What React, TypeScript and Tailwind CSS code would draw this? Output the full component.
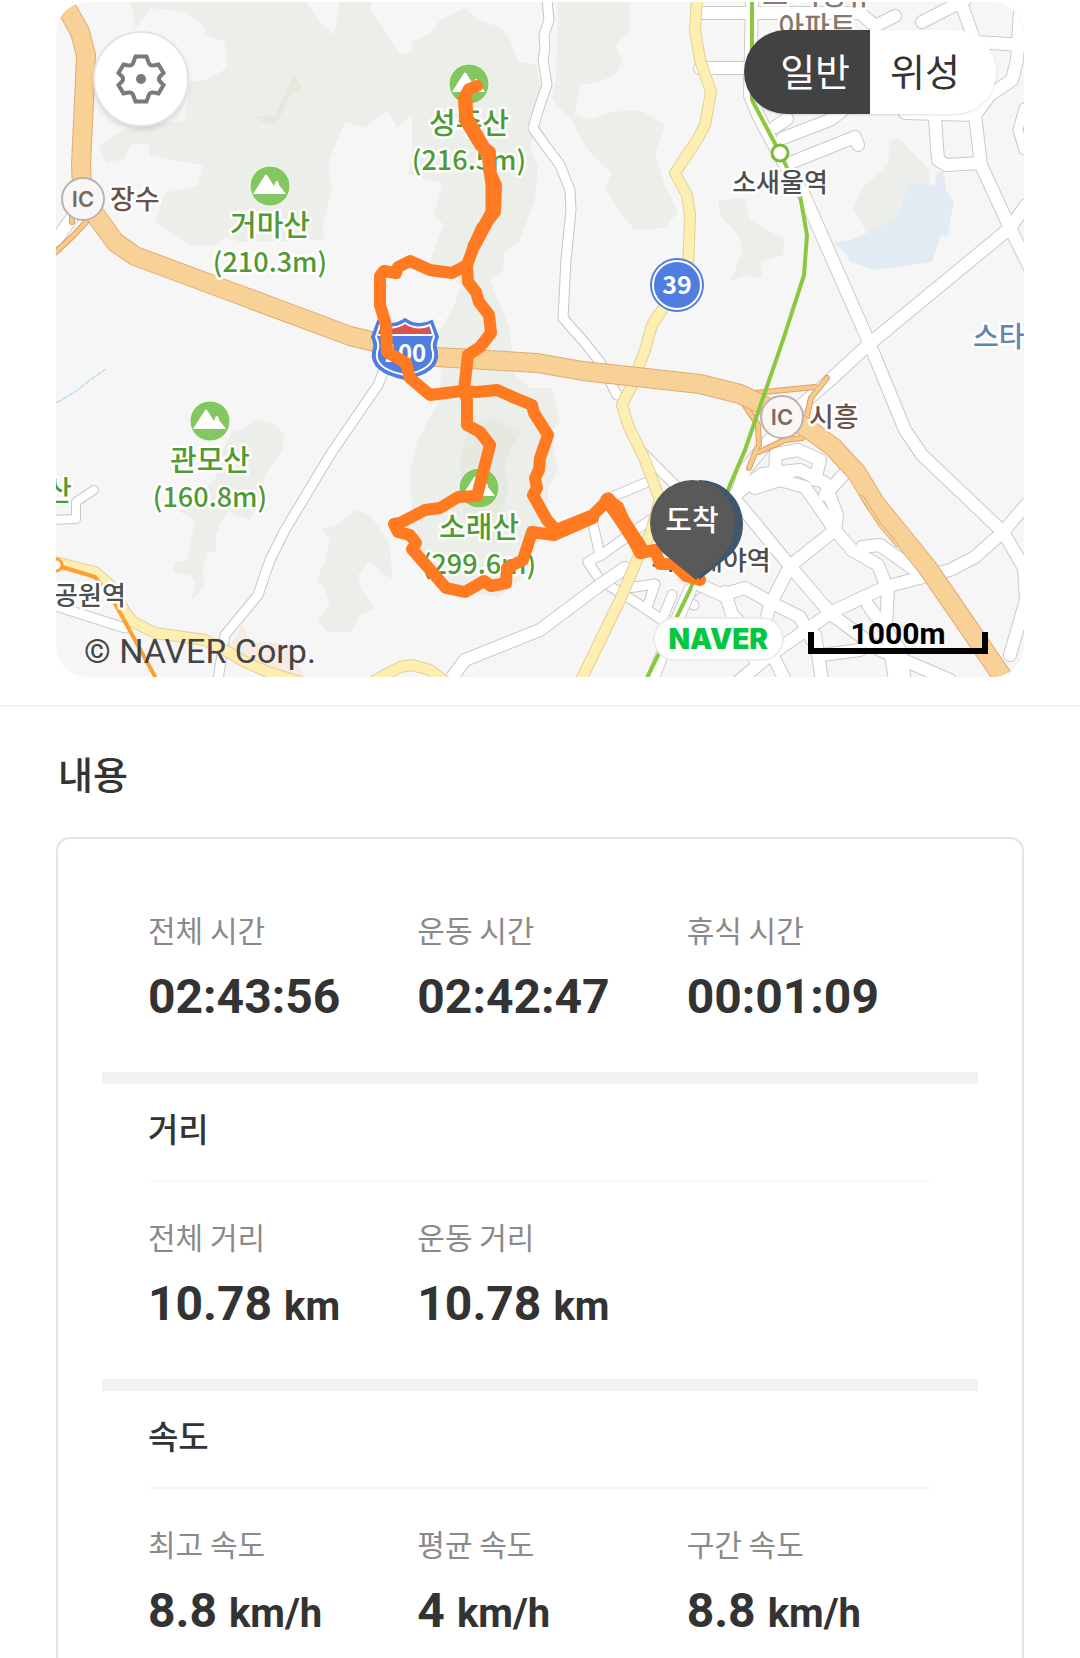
type Metric = { label: string; value: string; unit?: string };
type Section = { title?: string; items: Metric[] };

const sections: Section[] = [
  {
    items: [
      { label: "전체 시간", value: "02:43:56" },
      { label: "운동 시간", value: "02:42:47" },
      { label: "휴식 시간", value: "00:01:09" },
    ],
  },
  {
    title: "거리",
    items: [
      { label: "전체 거리", value: "10.78", unit: "km" },
      { label: "운동 거리", value: "10.78", unit: "km" },
    ],
  },
  {
    title: "속도",
    items: [
      { label: "최고 속도", value: "8.8", unit: "km/h" },
      { label: "평균 속도", value: "4", unit: "km/h" },
      { label: "구간 속도", value: "8.8", unit: "km/h" },
    ],
  },
];

const forests = [
  "130,0 136,28 150,8 185,12 200,22 207,35 225,42 227,68 207,80 190,82 185,120 125,130 110,138 99,147 107,163 125,158 130,145 148,143 150,155 170,160 203,165 198,185 165,193 155,222 175,235 190,245 215,245 225,237 240,242 325,240 323,225 332,190 328,165 334,148 345,122 365,128 388,110 397,128 412,115 412,155 408,175 443,183 434,215 444,225 434,250 430,262 462,285 452,310 430,345 442,370 438,402 418,440 410,470 412,510 400,530 440,590 500,597 520,580 530,560 548,520 548,490 558,470 550,435 560,420 552,388 530,388 514,374 510,330 490,280 503,270 505,252 520,240 535,200 538,165 530,150 543,100 536,64 518,62 510,40 500,27 478,20 465,8 440,20 432,32 412,42 412,52 400,55 388,35 370,8 372,0 340,0 334,35 320,22 305,0",
  "558,0 630,0 629,30 616,45 622,62 615,75 598,82 580,85 575,115 590,120 610,112 640,110 665,125 660,140 655,155 665,185 678,212 665,228 635,230 622,215 605,187 612,172 595,158 583,143 572,120 552,100 556,80",
  "898,137 915,155 930,170 929,185 910,182 895,220 868,234 853,210 862,188 888,165 890,142",
  "718,200 745,198 750,220 785,240 783,255 760,262 763,278 745,275 730,282 735,270 743,250 738,235 720,215",
  "232,432 240,430 258,420 275,424 285,435 282,450 265,475 262,500 250,520 235,515 228,510 215,535 217,552 207,553 203,570 205,585 190,602 196,585 190,575 173,573 175,562 187,560 190,545 195,520 180,512 215,480 220,455",
  "322,528 335,527 355,510 370,515 390,545 392,578 384,575 370,560 358,575 362,590 375,608 360,615 350,632 328,632 318,622 330,605 325,590 317,580 325,560 330,540",
];

const whiteRoads = [
  "547,0 549,20 544,35 545,48 543,60 547,85 540,105 533,128 545,145 560,165 570,190 571,210 566,260 563,318 585,343 600,362 617,395",
  "392,350 378,385 330,455 285,530 270,560 258,595 225,635 218,680",
  "642,452 672,482 690,500",
  "605,500 645,483",
  "592,520 600,555 588,562 600,580 640,605 662,620 672,595",
  "600,556 650,520",
  "628,588 655,584 648,605",
  "1024,108 1018,130 1024,150",
  "700,585 684,600 694,605",
];

const wideRoads = [
  "450,680 465,660 490,650 540,630 600,585 625,568",
  "700,13 860,13 875,26 895,16",
  "752,0 750,95 759,117 785,165 804,195 868,340 905,430 922,455 1003,532 1024,568 1026,600 1010,655",
  "700,68 748,68",
  "868,345 1010,228 1026,205",
  "868,345 830,380 790,415 745,470 735,500",
  "922,22 965,0",
  "960,0 975,42 1024,45",
  "1020,10 1017,60 1012,80 990,95 975,115 905,113",
  "935,118 938,160 946,165 980,163",
  "975,115 981,165 1010,228 1030,268",
  "783,138 830,120 850,105",
  "790,163 855,137 858,145",
  "775,127 787,119",
  "735,495 762,474 800,470 825,483 837,515 835,530 852,550 878,565 888,590 886,625 895,680",
  "755,488 780,480 805,487 835,530 790,566 740,505",
  "790,566 832,615 880,650 950,680",
  "790,566 770,605 755,660",
  "700,585 722,595 745,588 770,602 800,617 812,640",
  "740,680 770,655 832,612 885,587 950,570 975,557 1003,532 1026,505",
  "725,592 732,615 770,650 785,680",
  "815,635 822,680",
  "775,470 776,454 798,450 820,460 815,480",
  "845,473 825,495",
  "862,547 880,545 915,570",
  "868,605 900,650 905,680",
  "822,655 860,650",
  "690,590 668,640 652,680",
];

const yellowRoads = [
  "697,0 695,30 700,60 711,92 705,125 697,140 675,173 687,195 690,215 688,270 665,305 652,325 645,350 632,385 622,405 628,425 645,460 660,500 650,535 640,553 620,600 580,682",
  "50,561 95,572 110,585 125,612 133,622 155,633 205,640 225,650 245,662 268,672 300,682",
  "372,682 400,667 412,665 430,670 446,682",
];

const highway =
  "62,0 80,32 86,55 85,80 81,165 82,190 92,210 115,242 135,256 240,295 350,336 437,357 537,363 583,371 700,384 740,394 765,406 807,428 833,447 857,473 875,503 897,530 927,567 1006,682";

const ramps = [
  "755,393 815,387",
  "811,398 827,378",
  "811,398 806,420",
  "740,398 758,425 759,445",
  "759,452 785,440 802,438",
  "749,468 757,448",
  "56,252 74,235 86,222",
  "72,222 72,205",
];

const trails = [
  "477,86 469,89 464,98 465,120 480,145 490,152 489,170 496,185 495,212 482,228 474,246 467,265 452,273 430,270 410,261 398,267 396,273 384,271 380,276 380,305 386,325 387,352 406,363 410,378 430,395 462,391 477,392 497,390 515,398 532,405 534,413 548,435 540,458 539,470 535,478 537,488 533,495 547,520 556,530 593,515 608,500 618,507 628,530 640,553 655,550 660,564 674,564 686,576 700,580",
  "467,265 468,282 476,292 479,302 489,315 491,333 480,347 468,355 464,390 467,400 467,425 480,432 490,445 477,496 458,497 440,508 425,510 400,523 394,524 398,532 410,535 416,543 412,549 446,588 465,592 484,581 491,586 506,583 507,568 523,560 532,532 554,535 593,518",
];

function Lines({ points, casing, fill, width }: { points: string[]; casing: string; fill: string; width: number }) {
  return (
    <g fill="none" strokeLinejoin="round" strokeLinecap="round">
      {points.map((p) => (
        <polyline key={p} points={p} stroke={casing} strokeWidth={width + 2} />
      ))}
      {points.map((p) => (
        <polyline key={p} points={p} stroke={fill} strokeWidth={width} />
      ))}
    </g>
  );
}

function Mountain({ x, y, name, height }: { x: number; y: number; name: string; height: string }) {
  return (
    <g>
      <circle cx={x} cy={y} r="20" fill="#82c75f" stroke="#f3f8ef" strokeWidth="1" />
      <path
        d={`M${x - 17} ${y + 8}L${x - 5} ${y - 11}Q${x - 4} ${y - 12} ${x - 3} ${y - 11}L${x + 4} ${y}L${x + 6} ${y - 5}Q${x + 9} ${y - 5} ${x + 9} ${y - 1}L${x + 16} ${y + 8}Z`}
        fill="#fff"
      />
      <g fontWeight="500" fill="#4f9a35" stroke="#fff" strokeWidth="5" strokeLinejoin="round" paintOrder="stroke" textAnchor="middle">
        <text x={x} y={y + 50} fontSize="29">{name}</text>
        <text x={x} y={y + 86} fontSize="27">{height}</text>
      </g>
    </g>
  );
}

function Interchange({ x, y, name }: { x: number; y: number; name: string }) {
  return (
    <g>
      <circle cx={x} cy={y} r="21" fill="#f8f7f6" stroke="#bdb1ab" strokeWidth="2" />
      <text x={x} y={y + 8} fontSize="22" fontWeight="600" fill="#7b6a62" textAnchor="middle" className="font-[Inter,sans-serif]">
        IC
      </text>
      <text x={x + 27} y={y + 10} fontSize="27" fontWeight="500" fill="#6b5247" stroke="#fff" strokeWidth="5" strokeLinejoin="round" paintOrder="stroke">
        {name}
      </text>
    </g>
  );
}

function CourseMap() {
  return (
    <svg viewBox="56 2 968 675" className="block h-auto w-full bg-[#f6f6f6]" role="img" aria-label="코스 지도">
      {forests.map((p) => (
        <polygon key={p} points={p} fill="#ecefe9" />
      ))}
      <polygon points="470,425 490,418 522,432 510,450 505,465 508,490 500,520 495,545 465,530 460,460" fill="#e5e9df" />
      <polygon points="293,75 303,88 290,95 285,108 275,126 262,122 255,117 275,115 285,95" fill="#e5e9dc" />
      <polygon points="242,625 250,640 290,645 305,677 260,672 230,645" fill="#f7ebe5" />
      <polygon
        points="910,182 935,185 937,172 944,172 946,190 954,203 950,220 948,237 941,235 932,262 875,270 850,262 845,252 833,243 850,240 895,220 903,200"
        fill="#e2ebf3"
      />
      <polyline points="56,403 75,392 90,380 106,369" fill="none" stroke="#8fd0f5" strokeWidth="1" strokeDasharray="6 1" />

      <Lines points={whiteRoads} casing="#c6c6c6" fill="#fff" width={9} />
      <Lines points={wideRoads} casing="#cacaca" fill="#fff" width={12} />
      <Lines points={["50,520 76,519 76,502 94,490"]} casing="#c6c6c6" fill="#fff" width={8} />
      <Lines points={["50,604 125,628"]} casing="#cacaca" fill="#fff" width={9} />
      <Lines points={["56,240 76,212"]} casing="#cacaca" fill="#fff" width={12} />
      <Lines points={yellowRoads} casing="#e5cf92" fill="#fdeeb2" width={10} />
      <Lines points={ramps} casing="#dda066" fill="#f8c98a" width={4} />
      <Lines points={[highway]} casing="#e2ab72" fill="#f8d196" width={18} />
      <Lines points={["862,497 880,525 897,545"]} casing="#e2ab72" fill="#f8d196" width={2} />

      <polyline points="56,565 95,577 112,598 158,682" fill="none" stroke="#ffa02e" strokeWidth="4" />
      <circle cx="56" cy="565" r="6" fill="#fff" stroke="#ffa02e" strokeWidth="3" />
      <polyline
        points="752,0 752,100 780,153 800,195 807,235 804,275 783,340 745,450 730,485 690,590 645,682"
        fill="none"
        stroke="#8bc83f"
        strokeWidth="4"
      />
      <circle cx="780" cy="153" r="8" fill="#fff" stroke="#7db838" strokeWidth="3" />

      <g fontSize="28" fontWeight="500" fill="#8a776e" stroke="#fff" strokeWidth="5" paintOrder="stroke" textAnchor="middle">
        <text x="817" y="5">스 시영뷰</text>
        <text x="817" y="37">아파트</text>
      </g>
      <g fontSize="26" fontWeight="500" fill="#4e4e4e" stroke="#fff" strokeWidth="5" strokeLinejoin="round" paintOrder="stroke" textAnchor="middle">
        <text x="780" y="192">소새울역</text>
        <text x="711" y="570">시흥대야역</text>
        <text x="90" y="605">공원역</text>
      </g>
      <text x="973" y="347" fontSize="28" fontWeight="500" fill="#5e86b4" stroke="#fff" strokeWidth="5" paintOrder="stroke">
        스타
      </text>
      <text x="46" y="501" fontSize="28" fontWeight="500" fill="#4f9a35" stroke="#fff" strokeWidth="4" paintOrder="stroke">
        산
      </text>

      <Mountain x={270} y={186} name="거마산" height="(210.3m)" />
      <Mountain x={469} y={84} name="성주산" height="(216.5m)" />
      <Mountain x={210} y={421} name="관모산" height="(160.8m)" />
      <Mountain x={479} y={488} name="소래산" height="(299.6m)" />
      <Interchange x={83} y={199} name="장수" />
      <Interchange x={782} y={417} name="시흥" />

      {/* Route shields */}
      <circle cx="677" cy="285" r="27" fill="#4f7de0" />
      <circle cx="677" cy="285" r="24" fill="none" stroke="#fff" strokeWidth="2" />
      <text x="677" y="294" fontSize="25" fontWeight="700" fill="#fff" textAnchor="middle">39</text>
      <path
        d="M378 321Q392 328 405 319Q418 328 432 321L438 337Q434 345 437 352Q440 372 405 379Q370 372 373 352Q376 345 372 337Z"
        fill="#4f7de0"
        stroke="#4f7de0"
        strokeWidth="2"
      />
      <path d="M382 326Q394 331 405 323Q416 331 428 326L431 333L379 333Z" fill="#dd5050" />
      <path
        d="M380 325Q393 331 405 323Q417 331 430 325L434 337Q430 345 433 352Q436 369 405 375Q374 369 377 352Q380 345 376 337ZM378 335H432"
        fill="none"
        stroke="#fff"
        strokeWidth="2"
      />
      <text x="405" y="362" fontSize="24" fontWeight="700" fill="#fff" textAnchor="middle">100</text>

      <g fill="none" stroke="#ff7a21" strokeWidth="12" strokeLinejoin="round" strokeLinecap="round">
        {trails.map((p) => (
          <polyline key={p} points={p} />
        ))}
        <polyline points="466,100 467,118 488,155 492,185 492,212 474,246" strokeWidth="13" />
        <polyline points="608,500 622,520 642,551" strokeWidth="15" />
      </g>

      {/* Finish pin */}
      <path d="M699 480A44 44 0 0 1 743 524Q743 544 728 557L699 580Z" fill="#40566c" />
      <path d="M692 480A43 43 0 0 1 735 523Q735 542 722 556L696 580L663 553Q650 540 650 523A43 43 0 0 1 692 480Z" fill="#595959" />
      <text x="692" y="531" fontSize="29" fontWeight="500" fill="#fff" textAnchor="middle">도착</text>
    </svg>
  );
}

function GearIcon() {
  return (
    <svg viewBox="0 0 50 50" className="size-[50px]" fill="none" stroke="#7a7a7a" strokeWidth="4">
      <path d="M19.500 2.500H30.500L33 9.500Q34.500 12 37.500 11.500L42.500 10.500L47.500 19L43.500 23Q42.500 25 43.500 27L47.500 31L42.500 39.500L37.500 38.500Q34.500 38 33 40.500L30.500 47.500H19.500L17 40.500Q15.500 38 12.500 38.500L7.500 39.500L2.500 31L6.500 27Q7.500 25 6.500 23L2.500 19L7.500 10.500L12.500 11.500Q15.500 12 17 9.500Z" />
      <circle cx="25" cy="25" r="5" fill="#7a7a7a" stroke="none" />
    </svg>
  );
}

export default function App() {
  return (
    <main className="min-h-screen bg-white font-['Noto_Sans_CJK_KR',sans-serif] text-[#333]">
      <section className="border-b-2 border-[#f1f1f1] px-14 pt-0.5 pb-7">
        <div className="relative overflow-hidden rounded-[32px]">
          <CourseMap />

          <button
            type="button"
            aria-label="설정"
            className="absolute top-[29px] left-[37px] flex size-24 items-center justify-center rounded-full border-2 border-[#e4e4e4] bg-white shadow-md"
          >
            <GearIcon />
          </button>

          <div className="absolute top-7 right-7 flex overflow-hidden rounded-full text-[38px] leading-[80px] shadow-sm">
            <button type="button" aria-pressed="true" className="bg-[#424242] pr-5 pb-1 pl-9 text-white">
              일반
            </button>
            <button type="button" aria-pressed="false" className="bg-white pr-9 pb-1 pl-5">
              위성
            </button>
          </div>

          <p className="absolute bottom-1.5 left-7 font-[Roboto,sans-serif] text-[34px] leading-10 text-[#444]">© NAVER Corp.</p>
          <div className="absolute right-[240px] bottom-4 rounded-full border-2 border-[#ececec] bg-white px-3.5 font-[Inter,sans-serif] text-[28px] leading-10 font-black text-[#03c740]">
            NAVER
          </div>
          <div className="absolute right-9 bottom-[23px] w-[180px] pb-1 text-center font-[Roboto,sans-serif] text-[30px] leading-8 font-bold text-black">
            1000m
            <div className="absolute bottom-0 h-[22px] w-full border-6 border-t-0 border-black" />
          </div>
        </div>
      </section>

      <section className="px-14 pt-9">
        <h2 className="pl-0.5 text-[38px] leading-[60px] font-medium">내용</h2>
        <div className="mt-[34px] rounded-[14px] border-2 border-[#e3e3e3] px-11">
          {sections.map((section, index) => (
            <div key={index} className={index > 0 ? "border-t-12 border-[#f2f2f2]" : "pt-9"}>
              {section.title && (
                <h3 className="mx-[46px] border-b-2 border-[#f8f8f8] pb-2 text-[33px] leading-[88px] font-medium">
                  {section.title}
                </h3>
              )}
              <dl className="grid grid-cols-3 pt-[34px] pr-[22px] pb-[45px] pl-[46px]">
                {section.items.map((item) => (
                  <div key={item.label}>
                    <dt className="text-[30px] leading-10 text-[#8a8a8a]">{item.label}</dt>
                    <dd className="mt-[18px] font-[Roboto,sans-serif] text-[48px] leading-[60px] font-bold">
                      {item.value}
                      {item.unit && <span className="ml-3 text-[40px] leading-none">{item.unit}</span>}
                    </dd>
                  </div>
                ))}
              </dl>
            </div>
          ))}
        </div>
      </section>
    </main>
  );
}
